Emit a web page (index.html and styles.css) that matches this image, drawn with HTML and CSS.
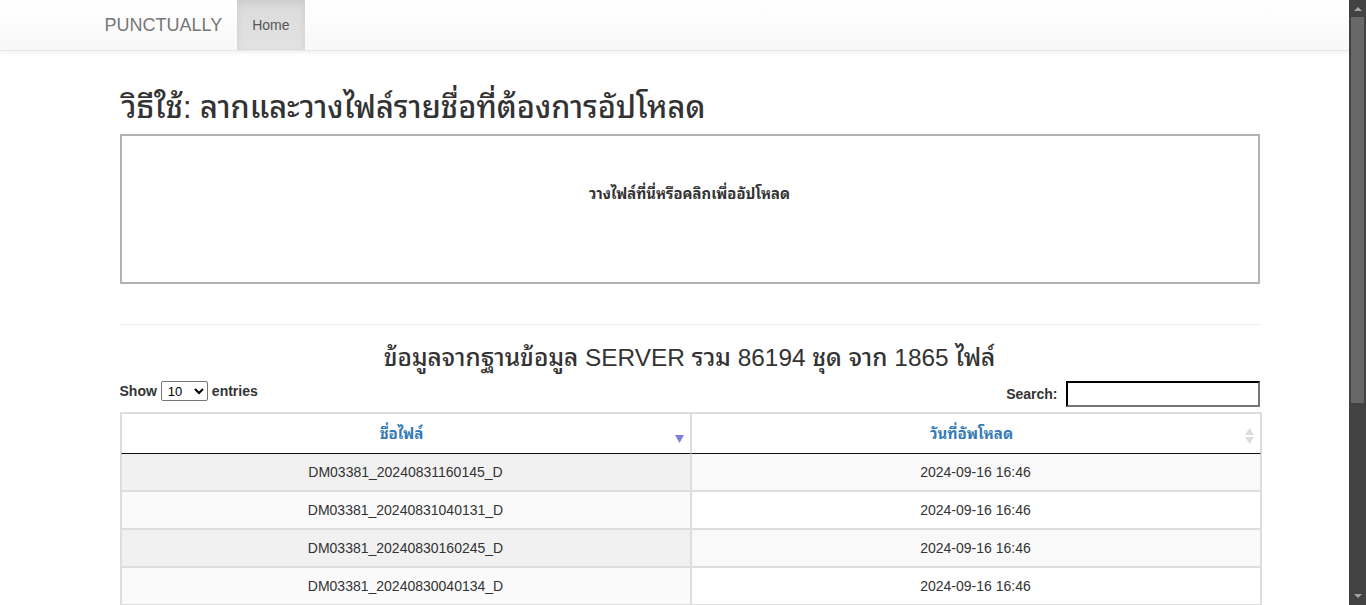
FILE: index.html
```html
<!DOCTYPE html>
<html lang="th">
<head>
<meta charset="utf-8">
<title>PUNCTUALLY</title>
<link rel="stylesheet" href="styles.css">
</head>
<body>
<nav class="navbar">
  <div class="nav-container">
    <a class="brand" href="#">PUNCTUALLY</a>
    <ul class="nav">
      <li class="active"><a href="#">Home</a></li>
    </ul>
  </div>
</nav>

<div class="container">
  <div class="main">
    <h2 class="howto">วิธีใช้: ลากและวางไฟล์รายชื่อที่ต้องการอัปโหลด</h2>
    <form class="dropzone">
      <div class="dz-message">วางไฟล์ที่นี่หรือคลิกเพื่ออัปโหลด</div>
    </form>
    <hr class="divider">
    <h3 class="summary">ข้อมูลจากฐานข้อมูล SERVER รวม 86194 ชุด จาก 1865 ไฟล์</h3>

    <div class="dt-controls">
      <label class="dt-length"><span>Show</span><select class="dt-select"><option>10</option><option>25</option><option>50</option><option>100</option></select><span>entries</span></label>
      <label class="dt-filter"><span>Search:</span><input class="dt-search" type="search"></label>
    </div>

    <table class="datatable">
      <thead>
        <tr>
          <th class="sort-desc">ชื่อไฟล์
            <svg class="sort-icon" width="9" height="8" viewBox="0 0 9 8"><path d="M0 0H9L4.5 8Z" fill="#7f7fdf"/></svg>
          </th>
          <th class="sort-both">วันที่อัพโหลด
            <svg class="sort-icon both" width="9" height="17" viewBox="0 0 9 17"><path d="M4.5 0L9 7H0Z" fill="#dcdcdc"/><path d="M0 9H9L4.5 16Z" fill="#dcdcdc"/></svg>
          </th>
        </tr>
      </thead>
      <tbody>
        <tr class="odd"><td class="sorted">DM03381_20240831160145_D</td><td>2024-09-16 16:46</td></tr>
        <tr class="even"><td class="sorted">DM03381_20240831040131_D</td><td>2024-09-16 16:46</td></tr>
        <tr class="odd"><td class="sorted">DM03381_20240830160245_D</td><td>2024-09-16 16:46</td></tr>
        <tr class="even"><td class="sorted">DM03381_20240830040134_D</td><td>2024-09-16 16:46</td></tr>
        <tr class="odd"><td class="sorted">DM03381_20240829160212_D</td><td>2024-09-16 16:46</td></tr>
        <tr class="even"><td class="sorted">DM03381_20240829040127_D</td><td>2024-09-16 16:46</td></tr>
        <tr class="odd"><td class="sorted">DM03381_20240828160133_D</td><td>2024-09-16 16:46</td></tr>
        <tr class="even"><td class="sorted">DM03381_20240828040140_D</td><td>2024-09-16 16:46</td></tr>
        <tr class="odd"><td class="sorted">DM03381_20240827160156_D</td><td>2024-09-16 16:46</td></tr>
        <tr class="even"><td class="sorted">DM03381_20240827040122_D</td><td>2024-09-16 16:46</td></tr>
      </tbody>
    </table>

    <div class="dt-footer">
      <div class="dt-info">Showing 1 to 10 of 1,865 entries</div>
      <div class="dt-paginate">
        <a class="pg disabled">Previous</a>
        <a class="pg current">1</a>
        <a class="pg">2</a>
        <a class="pg">3</a>
        <a class="pg">4</a>
        <a class="pg">5</a>
        <span class="pg-ellipsis">…</span>
        <a class="pg">187</a>
        <a class="pg">Next</a>
      </div>
    </div>
  </div>
</div>

<div class="scrollbar" aria-hidden="true">
  <div class="sb-arrow up"></div>
  <div class="sb-track"><div class="sb-thumb"></div></div>
  <div class="sb-arrow down"></div>
</div>
</body>
</html>
```

FILE: styles.css
```css
* {
  box-sizing: border-box;
}

html {
  overflow: hidden;
}

body {
  margin: 0;
  padding-right: 17px;
  font-family: "Liberation Sans", Arial, Tahoma, "Leelawadee UI", "Noto Sans Thai Looped", Loma, Garuda, "Noto Sans Thai", "Noto Sans", sans-serif;
  font-size: 14px;
  line-height: 20px;
  color: #333;
  background: #fff;
}

a {
  text-decoration: none;
}

/* fake window scrollbar */
.scrollbar {
  position: fixed;
  top: 0;
  right: 0;
  width: 17px;
  height: 100vh;
  background: #424242;
  display: flex;
  flex-direction: column;
}
.sb-arrow {
  height: 17px;
  flex: none;
  display: flex;
  justify-content: center;
}
.sb-arrow.up::before {
  content: "";
  margin-top: 7px;
  border-left: 4px solid transparent;
  border-right: 4px solid transparent;
  border-bottom: 4px solid #a5a5a5;
  height: 0;
}
.sb-arrow.down::before {
  content: "";
  margin-top: 6px;
  border-left: 4px solid transparent;
  border-right: 4px solid transparent;
  border-top: 4px solid #a5a5a5;
  height: 0;
}
.sb-track {
  flex: 1;
  padding: 0 2px;
}
.sb-thumb {
  height: 386px;
  background: #686868;
}

/* navbar */
.navbar {
  height: 51px;
  background: linear-gradient(to bottom, #fff 0, #f8f8f8 100%);
  border-bottom: 1px solid #e7e7e7;
  box-shadow: inset 0 1px 0 rgba(255,255,255,.15), 0 1px 5px rgba(0,0,0,.075);
  margin-bottom: 20px;
}
.nav-container {
  width: 1170px;
  margin: 0 auto;
  padding: 0 15px;
  display: flex;
  align-items: stretch;
  height: 50px;
}
.brand {
  margin-left: -15px;
  padding: 15px;
  font-size: 18px;
  line-height: 20px;
  color: #777;
}
.nav {
  list-style: none;
  margin: 0;
  padding: 0;
  display: flex;
}
.nav li a {
  display: block;
  padding: 15px;
  line-height: 20px;
  color: #555;
  height: 50px;
}
.nav li.active a {
  background: linear-gradient(to bottom, #dbdbdb 0, #e2e2e2 100%);
  box-shadow: inset 0 3px 9px rgba(0,0,0,.075);
}

/* content */
.container {
  width: 1170px;
  margin: 0 auto;
  padding: 0 15px;
}
.main {
  margin: 0 -15px 0 15px;
}

.howto {
  margin: 40px 0 10px 2px;
  font-size: 30.7px;
  line-height: 33px;
  font-weight: 500;
}

.dropzone {
  min-height: 150px;
  border: 2px solid rgba(0,0,0,.3);
  padding: 20px;
  margin: 0;
}
.dz-message {
  margin: 28px 0;
  text-align: center;
  font-weight: bold;
  font-size: 14.8px;
}

.divider {
  margin: 40px 0 20px;
  border: 0;
  border-top: 1px solid #eee;
  height: 0;
}

.summary {
  margin: 0 0 10px;
  font-size: 24.4px;
  line-height: 26px;
  font-weight: 500;
  text-align: center;
}

/* datatable controls */
.dt-controls {
  display: flex;
  justify-content: space-between;
  align-items: flex-start;
}
.dt-length, .dt-filter {
  display: flex;
  align-items: center;
  font-weight: bold;
  white-space: nowrap;
}
.dt-length {
  height: 20px;
}
.dt-select {
  width: 47px;
  height: 20px;
  margin: 0 4px;
  padding: 0 0 0 2px;
  font-family: "Liberation Sans", Arial, sans-serif;
  font-size: 13px;
  color: #000;
  background: #fff;
  border: 1px solid #767676;
  border-radius: 2px;
}
.dt-search {
  width: 194px;
  height: 26px;
  margin-left: 8px;
  border: 2px inset #767676;
  border-color: #2b2b2b #767676 #767676 #2b2b2b;
  padding: 1px 2px;
  font-size: 13px;
}

/* table */
.datatable {
  width: calc(100% + 2px);
  margin-top: 5px;
  border-collapse: separate;
  border-spacing: 0;
  border: 1px solid #ddd;
}
.datatable th {
  position: relative;
  padding: 10px 18px 9px 10px;
  border: 1px solid #ddd;
  border-bottom: 1px solid #111;
  color: #337ab7;
  font-weight: bold;
  font-size: 15px;
  line-height: 20px;
  text-align: center;
  background: #fff;
}
.sort-icon {
  position: absolute;
  right: 6px;
  top: 21px;
}
.sort-icon.both {
  top: 14px;
}
.datatable td {
  width: 50%;
  padding: 8px 10px;
  border: 1px solid #ddd;
  line-height: 20px;
  text-align: center;
}
.datatable tbody tr:first-child td {
  border-top: 0;
}
.datatable tr.odd td { background: #f9f9f9; }
.datatable tr.odd td.sorted { background: #f1f1f1; }
.datatable tr.even td { background: #fff; }
.datatable tr.even td.sorted { background: #fafafa; }

.dt-footer {
  display: flex;
  justify-content: space-between;
  align-items: center;
  padding: 10px 0 30px;
}
.dt-paginate {
  display: flex;
  gap: 2px;
}
.pg {
  padding: 4px 12px;
  color: #333;
  border: 1px solid transparent;
  border-radius: 2px;
}
.pg.current {
  border-color: #979797;
  background: linear-gradient(to bottom, #fff 0, #dcdcdc 100%);
}
.pg.disabled {
  color: #666;
}
.pg-ellipsis {
  padding: 4px 12px;
}
```
